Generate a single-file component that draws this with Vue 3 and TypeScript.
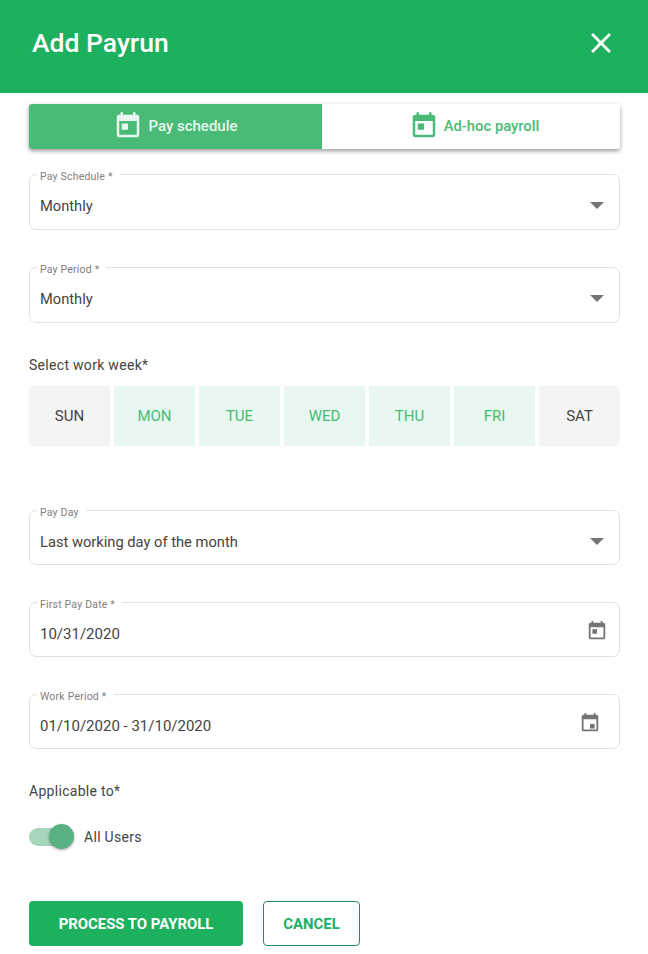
<script setup lang="ts">
interface Field { label: string; value: string; icon: 'arrow' | 'cal1' | 'cal2'; cls: string }
const top: Field[] = [
  { label: 'Pay Schedule *', value: 'Monthly', icon: 'arrow', cls: 'f1' },
  { label: 'Pay Period *', value: 'Monthly', icon: 'arrow', cls: 'f2' },
]
const bottom: Field[] = [
  { label: 'Pay Day', value: 'Last working day of the month', icon: 'arrow', cls: 'f3' },
  { label: 'First Pay Date *', value: '10/31/2020', icon: 'cal1', cls: 'f4 date' },
  { label: 'Work Period *', value: '01/10/2020 - 31/10/2020', icon: 'cal2', cls: 'f5 date' },
]
const days = [
  { n: 'SUN', on: false }, { n: 'MON', on: true }, { n: 'TUE', on: true }, { n: 'WED', on: true },
  { n: 'THU', on: true }, { n: 'FRI', on: true }, { n: 'SAT', on: false },
]
const calPath = 'M19 3h-1V1h-2v2H8V1H6v2H5c-1.11 0-2 .9-2 2v14c0 1.1.89 2 2 2h14c1.1 0 2-.9 2-2V5c0-1.1-.9-2-2-2zm0 16H5V8h14v11z'
</script>

<template>
  <div class="page">
    <header class="head">
      <h1 class="title">Add Payrun</h1>
      <svg class="close" viewBox="0 0 24 24" width="34" height="34"><path fill="#fff" d="M19 6.41 17.59 5 12 10.59 6.41 5 5 6.41 10.59 12 5 17.59 6.41 19 12 13.41 17.59 19 19 17.59 13.41 12z"/></svg>
    </header>

    <main class="body">
      <div class="tabs">
        <div class="tab active">
          <svg viewBox="0 0 24 24" width="30" height="30"><path fill="#e8f7ef" :d="calPath"/><path fill="#e8f7ef" d="M7 10h5v5H7z"/></svg>
          <span>Pay schedule</span>
        </div>
        <div class="tab second">
          <svg viewBox="0 0 24 24" width="30" height="30"><path fill="#49bb77" :d="calPath"/><path fill="#49bb77" d="M7 10h5v5H7z"/></svg>
          <span>Ad-hoc payroll</span>
        </div>
      </div>

      <div v-for="f in top" :key="f.label" class="field" :class="f.cls">
        <span class="label">{{ f.label }}</span>
        <span class="value">{{ f.value }}</span>
        <span class="arrow"></span>
      </div>

      <div class="section week-title">Select work week*</div>
      <div class="days">
        <div v-for="d in days" :key="d.n" class="day" :class="{ on: d.on }">{{ d.n }}</div>
      </div>

      <div v-for="f in bottom" :key="f.label" class="field" :class="f.cls">
        <span class="label">{{ f.label }}</span>
        <span class="value">{{ f.value }}</span>
        <span v-if="f.icon === 'arrow'" class="arrow"></span>
        <svg v-else-if="f.icon === 'cal1'" class="cal c1" viewBox="0 0 24 24" width="22" height="22"><path fill="#757575" :d="calPath"/><path fill="#757575" d="M7 10h5v5H7z"/></svg>
        <svg v-else class="cal c2" viewBox="0 0 24 24" width="22" height="22"><path fill="#757575" :d="calPath"/><path fill="#757575" d="M12 13h5v5h-5z"/></svg>
      </div>

      <div class="section applicable">Applicable to*</div>
      <div class="switch-row">
        <span class="switch"><span class="track"></span><span class="thumb"></span></span>
        <span class="switch-text">All Users</span>
      </div>

      <div class="actions">
        <button class="btn primary">PROCESS TO PAYROLL</button>
        <button class="btn ghost">CANCEL</button>
      </div>
    </main>
  </div>
</template>

<style>
html, body { margin: 0; background: #fff; }
</style>

<style scoped>
.page {
  width: 648px;
  height: 954px;
  overflow: hidden;
  background: #fff;
  font-family: Roboto, "Liberation Sans", sans-serif;
  color: #444;
}
.head {
  height: 93px;
  background: #1cb05f;
  display: flex;
  align-items: center;
  justify-content: space-between;
  padding: 0 30px 7px 32px;
  box-sizing: border-box;
}
.title {
  margin: 0 0 2px;
  font-size: 26.5px;
  font-weight: 500;
  color: #fff;
}
.close { display: block; }
.body {
  padding: 11px 28px 0 29px;
  display: flex;
  flex-direction: column;
}
.tabs {
  display: flex;
  height: 45px;
  border-radius: 3px;
  box-shadow: 0 2px 4px rgba(0, 0, 0, 0.4);
  overflow: hidden;
  background: #fff;
}
.tab {
  flex: 1 0 0;
  display: flex;
  align-items: center;
  justify-content: center;
  gap: 5px;
  font-size: 15px;
  font-weight: 500;
  color: #49bb77;
  padding-bottom: 2px;
  box-sizing: border-box;
}
.tab.active {
  flex: 0 0 293px;
  background: #49bb77;
  color: #e8f7ef;
}
.tab.second {
  padding-left: 6px;
  font-size: 14.8px;
}
.field {
  position: relative;
  height: 56px;
  box-sizing: border-box;
  border: 1px solid #e0e0e0;
  border-radius: 7px;
  display: flex;
  align-items: center;
  padding: 8px 10px 0;
  flex: none;
}
.f1 { margin-top: 25px; }
.f2 { margin-top: 37px; }
.f3 { margin-top: 64px; height: 55px; }
.f4 { margin-top: 37px; height: 55px; }
.f5 { margin-top: 37px; height: 55px; }
.label {
  position: absolute;
  left: 7px;
  top: -4px;
  padding: 0 7px 0 3px;
  background: #fff;
  font-size: 10.5px;
  line-height: 12px;
  color: #808080;
  letter-spacing: 0.2px;
}
.value {
  font-size: 14.7px;
  color: #444;
}
.date .value { font-size: 15px; }
.arrow {
  position: absolute;
  right: 15px;
  top: 27px;
  width: 0;
  height: 0;
  border-left: 7px solid transparent;
  border-right: 7px solid transparent;
  border-top: 7px solid #757575;
}
.cal { position: absolute; top: 17px; }
.c1 { right: 11px; }
.c2 { right: 18px; }
.section {
  font-size: 14px;
  line-height: 18px;
  color: #444;
  letter-spacing: 0.3px;
}
.week-title { margin-top: 33px; }
.days {
  display: grid;
  grid-template-columns: repeat(7, 81px);
  gap: 4px;
  margin-top: 12px;
  border-radius: 5px;
  overflow: hidden;
}
.day {
  height: 60px;
  background: #f4f4f4;
  display: flex;
  align-items: center;
  justify-content: center;
  font-size: 15px;
  color: #444;
}
.day.on {
  background: #e8f7ef;
  color: #49bb77;
}
.applicable { margin-top: 33px; }
.switch-row {
  display: flex;
  align-items: center;
  gap: 10px;
  margin-top: 24px;
  height: 26px;
}
.switch {
  position: relative;
  width: 45px;
  height: 26px;
  display: block;
}
.track {
  position: absolute;
  left: 0;
  top: 4px;
  width: 42px;
  height: 18px;
  border-radius: 9px;
  background: #a6d7bc;
}
.thumb {
  position: absolute;
  left: 20px;
  top: 0;
  width: 25px;
  height: 25px;
  border-radius: 50%;
  background: #58b180;
  box-shadow: 0 1px 3px rgba(0, 0, 0, 0.35);
}
.switch-text {
  font-size: 14px;
  color: #444;
  letter-spacing: 0.3px;
}
.actions {
  display: flex;
  gap: 20px;
  margin-top: 51px;
}
.btn {
  height: 45px;
  border-radius: 4px;
  font-family: inherit;
  font-size: 14.9px;
  font-weight: 700;
  box-sizing: border-box;
  padding: 0;
}
.primary {
  width: 214px;
  background: #1cb05f;
  border: none;
  color: #fff;
}
.ghost {
  width: 97px;
  background: #fff;
  border: 1px solid #1f8f5f;
  color: #1cb05f;
}
</style>
